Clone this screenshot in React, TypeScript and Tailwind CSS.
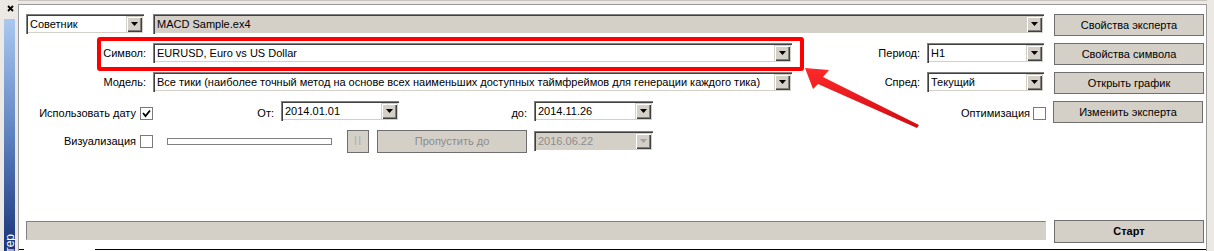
import React from "react";

const SUNKEN =
  "shadow-[inset_1px_1px_0_#808080,inset_2px_2px_0_#404040,inset_-1px_-1px_0_#ffffff,inset_-2px_-2px_0_#d4d0c8]";

function ArrowBtn({ disabled = false }: { disabled?: boolean }) {
  return (
    <div className="w-[16px] h-[16px] shrink-0 bg-[#d4d0c8] flex items-center justify-center shadow-[inset_1px_1px_0_#d4d0c8,inset_2px_2px_0_#ffffff,inset_-1px_-1px_0_#404040,inset_-2px_-2px_0_#808080]">
      <svg width="7" height="4" viewBox="0 0 7 4">
        <polygon points="0,0 7,0 3.5,4" fill={disabled ? "#a0a0a0" : "#000000"} />
      </svg>
    </div>
  );
}

function Select({
  cls,
  value,
  textCls = "text-black",
}: {
  cls: string;
  value: string;
  textCls?: string;
}) {
  return (
    <div className={`h-[20px] shrink-0 flex items-stretch p-[2px] ${SUNKEN} ${cls}`}>
      <div className={`flex-1 flex items-center pl-[2px] whitespace-nowrap overflow-hidden leading-none ${textCls}`}>
        {value}
      </div>
      <ArrowBtn disabled={textCls !== "text-black"} />
    </div>
  );
}

function Btn({ children, cls = "", textCls = "text-black" }: { children: React.ReactNode; cls?: string; textCls?: string }) {
  return (
    <div
      className={`h-[22px] bg-[#d4d0c8] border border-[#6f6f6f] flex items-center justify-center leading-none shrink-0 whitespace-nowrap ${textCls} ${cls}`}
    >
      {children}
    </div>
  );
}

function Check({ checked = false }: { checked?: boolean }) {
  return (
    <div className="w-[13px] h-[13px] bg-white border border-[#7a7a7a] shrink-0 flex items-center justify-center">
      {checked && (
        <svg width="9" height="9" viewBox="0 0 9 9">
          <polyline points="1,4 3.5,7 8,1.5" fill="none" stroke="#000" strokeWidth="1.8" />
        </svg>
      )}
    </div>
  );
}

export default function App() {
  return (
    <div className="relative w-[1214px] h-[251px] overflow-hidden flex bg-[#ece9e4] font-['Liberation_Sans',Arial,sans-serif] text-[11px] text-black">
      {/* Sidebar */}
      <div className="w-[18px] h-full flex flex-col shrink-0">
        <div className="h-[19px] flex items-center justify-center pl-[3px] pb-[2px]">
          <svg width="7" height="7" viewBox="0 0 7 7">
            <path d="M1 1 L6 6 M6 1 L1 6" stroke="#000" strokeWidth="1.8" />
          </svg>
        </div>
        <div className="flex-1 ml-[4px] w-[11px] bg-gradient-to-b from-[#aac8ef] via-[#5f82c0] to-[#1b3479] flex flex-col justify-end items-center overflow-hidden">
          <span className="[writing-mode:vertical-rl] rotate-180 text-white text-[12px] leading-none mb-[-21px] whitespace-nowrap">
            Тестер
          </span>
        </div>
      </div>

      {/* Main panel */}
      <div className="flex-1 flex flex-col">
        <div className="h-[4px] bg-[#ece9e4] border-t border-[#c8c5c0]" />
        <div className="flex-1 bg-white border-l border-t border-r border-[#9a9a9a] flex flex-col pt-[9px]">
          <div className="flex flex-col gap-[7px] whitespace-nowrap">
            {/* Row 1 */}
            <div className="h-[22px] flex items-start pl-[7px]">
              <Select cls="w-[118px] bg-white" value="Советник" />
              <Select cls="w-[891px] ml-[9px] bg-[#d4d0c8]" value="MACD Sample.ex4" />
              <Btn cls="w-[150px] ml-[10px]">Свойства эксперта</Btn>
            </div>
            {/* Row 2 */}
            <div className="h-[22px] flex items-start pl-[7px]">
              <div className="w-[120px] h-[20px] flex items-center justify-end">Символ:</div>
              <Select cls="w-[639px] ml-[7px] bg-white" value="EURUSD, Euro vs US Dollar" />
              <div className="w-[128px] h-[20px] flex items-center justify-end">Период:</div>
              <Select cls="w-[117px] ml-[7px] bg-white" value="H1" />
              <Btn cls="w-[150px] ml-[10px]">Свойства символа</Btn>
            </div>
            {/* Row 3 */}
            <div className="h-[22px] flex items-start pl-[7px]">
              <div className="w-[120px] h-[20px] flex items-center justify-end">Модель:</div>
              <Select
                cls="w-[639px] ml-[7px] bg-white"
                value="Все тики (наиболее точный метод на основе всех наименьших доступных таймфреймов для генерации каждого тика)"
              />
              <div className="w-[128px] h-[20px] flex items-center justify-end">Спред:</div>
              <Select cls="w-[117px] ml-[7px] bg-white" value="Текущий" />
              <Btn cls="w-[150px] ml-[10px]">Открыть график</Btn>
            </div>
            {/* Row 4 */}
            <div className="h-[22px] flex items-start pl-[7px] pr-[3px]">
              <div className="w-[127px] h-[24px] flex items-center justify-end gap-[4px]">
                <span>Использовать дату</span>
                <Check checked />
              </div>
              <div className="w-[121px] h-[22px] pt-[2px] flex items-center justify-end">От:</div>
              <Select cls="w-[118px] ml-[7px] bg-white" value="2014.01.01" />
              <div className="w-[128px] h-[22px] pt-[2px] flex items-center justify-end">до:</div>
              <Select cls="w-[119px] ml-[7px] bg-white" value="2014.11.26" />
              <div className="flex-1 h-[24px] flex items-center justify-end gap-[3px]">
                <span>Оптимизация</span>
                <Check />
              </div>
              <Btn cls="w-[150px] ml-[7px]">Изменить эксперта</Btn>
            </div>
            {/* Row 5 */}
            <div className="h-[22px] flex items-center pl-[7px]">
              <div className="w-[127px] h-[20px] flex items-center justify-end gap-[4px]">
                <span>Визуализация</span>
                <Check />
              </div>
              <div className="w-[165px] h-[7px] ml-[14px] bg-white border border-[#808080]" />
              <Btn cls="w-[22px] h-[23px] ml-[15px]" textCls="text-[#b0b0b0]">
                <span className="text-[12px] tracking-[1px]">II</span>
              </Btn>
              <Btn cls="w-[150px] h-[23px] ml-[8px]" textCls="text-[#8c8c8c]">
                Пропустить до
              </Btn>
              <Select cls="w-[119px] ml-[7px] bg-[#d4d0c8]" value="2016.06.22" textCls="text-[#8c8c8c]" />
            </div>
          </div>

          {/* Bottom row */}
          <div className="h-[23px] mt-[68px] flex items-start pl-[7px]">
            <div className="w-[1020px] h-[19px] mt-[1px] bg-[#d4d0c8] border border-[#808080] border-b-[#d4d0c8] border-r-[#d4d0c8]" />
            <Btn cls="w-[150px] h-[23px] ml-[8px] font-bold">Старт</Btn>
          </div>

          <div className="flex-1" />
          <div className="h-[1px] flex">
            <div className="w-[5px] bg-black" />
            <div className="w-[71px] bg-white" />
            <div className="flex-1 bg-black" />
          </div>
          <div className="h-[1px] bg-white" />
        </div>
      </div>
      <div className="w-[7px] shrink-0" />

      {/* Annotation: highlight box */}
      <div className="absolute left-[97px] top-[37px] w-[707px] h-[34px] border-[4px] border-[#ff0000] rounded-[3px] pointer-events-none" />
      {/* Annotation: arrow */}
      <svg className="absolute left-0 top-0 pointer-events-none" width="1214" height="251" viewBox="0 0 1214 251">
        <defs>
          <linearGradient id="ag" x1="0" y1="0" x2="0" y2="1">
            <stop offset="0" stopColor="#ff2a2a" />
            <stop offset="1" stopColor="#d00c12" />
          </linearGradient>
        </defs>
        <polygon
          points="805,68 829,70 823,77 919,125 917,128 818,84 813,89"
          fill="url(#ag)"
        />
      </svg>
    </div>
  );
}
